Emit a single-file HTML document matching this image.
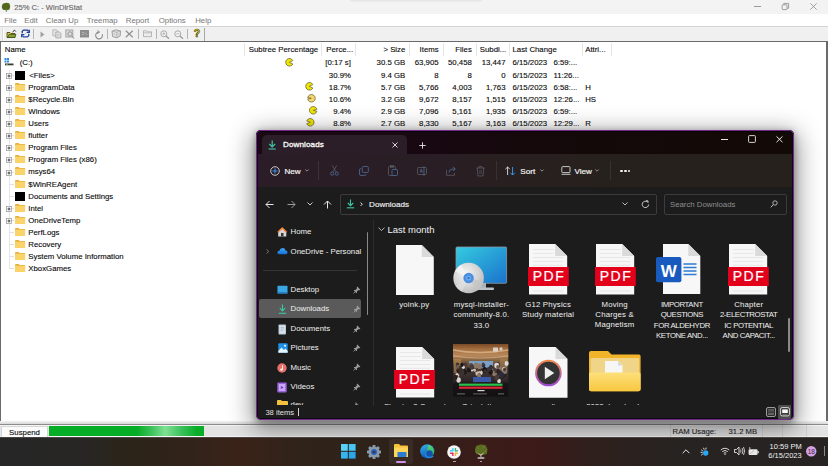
<!DOCTYPE html>
<html><head><meta charset="utf-8"><style>
html,body{margin:0;padding:0;width:828px;height:466px;overflow:hidden;background:#fff;}
body{position:relative;font-family:"Liberation Sans", sans-serif;}
.t{position:absolute;white-space:nowrap;}
.b{position:absolute;}
svg.b{overflow:visible;}
</style></head><body>
<div class="b" style="left:0px;top:0px;width:828px;height:14px;background:#f3f3f3"></div><div class="b" style="left:350px;top:0px;width:132px;height:3.2px;background:linear-gradient(rgba(0,0,0,0.055),rgba(0,0,0,0));border-radius:0 0 30px 30px;filter:blur(0.6px)"></div><svg class="b" style="left:1px;top:2px;" width="10" height="10" viewBox="0 0 10 10"><path d="M1.2 3Q1.5 1 3.5 1.2Q5 0.2 6.8 1Q8.8 0.8 8.8 2.8Q9.6 4.5 8.8 6.2Q9 8 7 8Q5.5 8.6 4 8Q1.8 8.4 1.2 6.5Q0.3 4.8 1.2 3Z" fill="#506a1c"/><circle cx="7.2" cy="5" r="0.9" fill="#7a4a30" opacity="0.7"/><circle cx="2.4" cy="5.2" r="0.7" fill="#7a4a30" opacity="0.6"/><rect x="4.8" y="7.5" width="1" height="2.5" fill="#8a8a7a"/></svg><div class="t" style="left:14.2px;top:1.5999999999999996px;font-size:7.6px;line-height:12px;color:#666;font-weight:normal;-webkit-text-stroke:0.12px #666;">25% C: - WinDirStat</div><div class="b" style="left:754.3px;top:6px;width:6.4px;height:0.8px;background:#9a9a9a"></div><svg class="b" style="left:780.5px;top:2.2px;" width="9" height="9" viewBox="0 0 9 9"><rect x="1.2" y="2.8" width="4.8" height="4.8" rx="0.6" fill="none" stroke="#8a8a8a" stroke-width="0.8"/><path d="M2.8 2.8V1.4H7.6V6.2H6" fill="none" stroke="#8a8a8a" stroke-width="0.8"/></svg><svg class="b" style="left:809.5px;top:3.1px;" width="7" height="7" viewBox="0 0 7 7"><path d="M0.3 0.3L6.7 6.7M6.7 0.3L0.3 6.7" stroke="#8a8a8a" stroke-width="0.8"/></svg><div class="b" style="left:0px;top:14px;width:828px;height:12.5px;background:#fff"></div><div class="t" style="left:4.2px;top:14.8px;font-size:7.8px;line-height:12px;color:#7c7c7c;font-weight:normal;-webkit-text-stroke:0.05px #7c7c7c">File</div><div class="t" style="left:24.2px;top:14.8px;font-size:7.8px;line-height:12px;color:#7c7c7c;font-weight:normal;-webkit-text-stroke:0.05px #7c7c7c">Edit</div><div class="t" style="left:45.8px;top:14.8px;font-size:7.8px;line-height:12px;color:#7c7c7c;font-weight:normal;-webkit-text-stroke:0.05px #7c7c7c">Clean Up</div><div class="t" style="left:86.7px;top:14.8px;font-size:7.8px;line-height:12px;color:#7c7c7c;font-weight:normal;-webkit-text-stroke:0.05px #7c7c7c">Treemap</div><div class="t" style="left:125.8px;top:14.8px;font-size:7.8px;line-height:12px;color:#7c7c7c;font-weight:normal;-webkit-text-stroke:0.05px #7c7c7c">Report</div><div class="t" style="left:158.8px;top:14.8px;font-size:7.8px;line-height:12px;color:#7c7c7c;font-weight:normal;-webkit-text-stroke:0.05px #7c7c7c">Options</div><div class="t" style="left:195.2px;top:14.8px;font-size:7.8px;line-height:12px;color:#7c7c7c;font-weight:normal;-webkit-text-stroke:0.05px #7c7c7c">Help</div><div class="b" style="left:0px;top:26px;width:828px;height:1px;background:#d4d4d4"></div><div class="b" style="left:0px;top:27px;width:828px;height:14px;background:#f0f0f0"></div><div class="b" style="left:1.8px;top:28px;width:1px;height:13px;background:#dadada"></div><div class="b" style="left:2.8px;top:28px;width:0.8px;height:13px;background:#fff"></div><svg class="b" style="left:6px;top:28.5px;" width="11" height="10" viewBox="0 0 11 10"><path d="M1 3.5H4L5 4.5H9V8.5H1Z" fill="#d8c040" stroke="#3a3a10" stroke-width="0.8"/><path d="M1.5 8.5L3 5.5H10L8.8 8.5Z" fill="#8aa030" stroke="#2a3a10" stroke-width="0.6"/><path d="M6.5 3L8.5 1.2L9.8 2.5" fill="none" stroke="#222" stroke-width="1"/></svg><svg class="b" style="left:20.5px;top:29.3px;" width="9" height="9" viewBox="0 0 9 9"><path d="M1.2 4.3V2.2L2.6 1.1H6.6L7.8 2.4" fill="none" stroke="#1a3a90" stroke-width="1.3"/><path d="M8.4 0.8V3.4H5.8" fill="none" stroke="#1a3a90" stroke-width="1.1"/><path d="M7.8 4.7V6.8L6.4 7.9H2.4L1.2 6.6" fill="none" stroke="#2048a8" stroke-width="1.3"/><path d="M0.6 8.2V5.6H3.2" fill="none" stroke="#2048a8" stroke-width="1.1"/><path d="M2.5 6.5L6.5 2.5" stroke="#7a6ac8" stroke-width="0.6" opacity="0.6"/></svg><div class="b" style="left:33.2px;top:29px;width:1px;height:10px;background:#b4b4b4"></div><svg class="b" style="left:40px;top:30.5px;" width="5" height="7" viewBox="0 0 5 7"><path d="M0.5 0.5L4.5 3.5L0.5 6.5Z" fill="#a0a0a0"/></svg><svg class="b" style="left:51.5px;top:29px;" width="10" height="9.5" viewBox="0 0 10 9.5"><path d="M0.8 0.8H4.5L5.8 2.1V6.8H0.8Z" fill="#e6e6e6" stroke="#b4b4b4" stroke-width="0.9"/><path d="M3.8 3H7.6L8.9 4.3V8.9H3.8Z" fill="#e0e0e0" stroke="#a8a8a8" stroke-width="0.9"/><path d="M5 5.5H7.5M5 7H7.5" stroke="#b8b8b8" stroke-width="0.6"/></svg><svg class="b" style="left:65px;top:29px;" width="10" height="10" viewBox="0 0 10 10"><rect x="0.8" y="1" width="7" height="7" fill="#d8d8d8" stroke="#a8a8a8" stroke-width="1"/><circle cx="5" cy="5" r="2.2" fill="none" stroke="#9a9a9a" stroke-width="1"/><path d="M7 7L9 9.5" stroke="#9a9a9a" stroke-width="1.2"/></svg><svg class="b" style="left:80px;top:30px;" width="9" height="7.5" viewBox="0 0 9 7.5"><rect x="0" y="0" width="9" height="7.5" fill="#8c8c8c"/><path d="M2 2.5H4M2 4.5H4M5 2.5L7 5" stroke="#c8c8c8" stroke-width="0.7"/></svg><svg class="b" style="left:93.5px;top:30px;" width="10" height="9" viewBox="0 0 10 9"><path d="M4.6 2.1A3.4 3.4 0 1 0 8.2 4.2" fill="none" stroke="#8a8a8a" stroke-width="1.1"/><path d="M3.4 0.6L5.6 2.1L3.4 3.6" fill="none" stroke="#8a8a8a" stroke-width="1"/></svg><div class="b" style="left:106.6px;top:29px;width:1px;height:10px;background:#b4b4b4"></div><svg class="b" style="left:110.8px;top:29.2px;" width="10.5" height="9.5" viewBox="0 0 10.5 9.5"><path d="M1 2.2L5 0.8L9.6 2L9.2 7L5.8 8.8L1.6 7.6Z" fill="#dedede" stroke="#9a9a9a" stroke-width="0.9"/><path d="M5.8 3.2V8.6M1 2.2L5.8 3.2L9.6 2" fill="none" stroke="#a8a8a8" stroke-width="0.7"/><path d="M2.8 4.5L4.2 5.8M8 4.2L7 6" stroke="#b0b0b0" stroke-width="0.7"/></svg><svg class="b" style="left:125px;top:30.2px;" width="8.5" height="8" viewBox="0 0 8.5 8"><path d="M0.8 0.8L7.7 7.2M7.7 0.8L0.8 7.2" stroke="#8f8f8f" stroke-width="1.2"/></svg><div class="b" style="left:138.3px;top:29px;width:1px;height:10px;background:#b4b4b4"></div><svg class="b" style="left:143px;top:30.3px;" width="9" height="7.2" viewBox="0 0 9 7.2"><path d="M0.5 6.7V0.8H3.5L4.5 1.8H8.5V6.7Z" fill="#ececec" stroke="#b0b0b0" stroke-width="0.9"/><path d="M0.5 2.8H8.5" stroke="#b0b0b0" stroke-width="0.7"/></svg><div class="b" style="left:155.7px;top:29px;width:1px;height:10px;background:#b4b4b4"></div><svg class="b" style="left:160px;top:30px;" width="9.5" height="9" viewBox="0 0 9.5 9"><circle cx="3.8" cy="3.8" r="3" fill="#f4f4f4" stroke="#a8a8a8" stroke-width="1"/><path d="M2.3 3.8H5.3M3.8 2.3V5.3" stroke="#a8a8a8" stroke-width="0.8"/><path d="M6 6L9 8.8" stroke="#9a9a9a" stroke-width="1.3"/></svg><svg class="b" style="left:174px;top:30px;" width="9.5" height="9" viewBox="0 0 9.5 9"><circle cx="3.8" cy="3.8" r="3" fill="#f4f4f4" stroke="#a8a8a8" stroke-width="1"/><path d="M2.3 3.8H5.3" stroke="#a8a8a8" stroke-width="0.8"/><path d="M6 6L9 8.8" stroke="#9a9a9a" stroke-width="1.3"/></svg><div class="b" style="left:187.3px;top:29px;width:1px;height:10px;background:#b4b4b4"></div><svg class="b" style="left:192.5px;top:29px;" width="8" height="9" viewBox="0 0 8 9"><text x="4" y="8.4" text-anchor="middle" font-family="Liberation Sans" font-weight="bold" font-size="10.5" fill="#e4dc00" stroke="#3a3800" stroke-width="0.55">?</text></svg><div class="b" style="left:203.5px;top:27.5px;width:1.2px;height:13.5px;background:#a8a8a8"></div><div class="b" style="left:0px;top:41px;width:828px;height:1px;background:#6a6a6a"></div><div class="b" style="left:0px;top:42px;width:827px;height:381px;background:#fff"></div><div class="b" style="left:0px;top:42px;width:1px;height:381px;background:#6a6a6a"></div><div class="b" style="left:826px;top:42px;width:1.5px;height:381px;background:#6a6a6a"></div><div class="t" style="left:4.8px;top:43.5px;font-size:7.8px;line-height:12px;color:#0a0a0a;font-weight:normal;-webkit-text-stroke:0.12px #0a0a0a;">Name</div><div class="b" style="left:243.5px;top:43px;width:1px;height:13px;background:#e6e6e6"></div><div class="b" style="left:320.7px;top:43px;width:1px;height:13px;background:#e6e6e6"></div><div class="b" style="left:354.6px;top:43px;width:1px;height:13px;background:#e6e6e6"></div><div class="b" style="left:408.9px;top:43px;width:1px;height:13px;background:#e6e6e6"></div><div class="b" style="left:442.6px;top:43px;width:1px;height:13px;background:#e6e6e6"></div><div class="b" style="left:475.8px;top:43px;width:1px;height:13px;background:#e6e6e6"></div><div class="b" style="left:509px;top:43px;width:1px;height:13px;background:#e6e6e6"></div><div class="b" style="left:581.5px;top:43px;width:1px;height:13px;background:#e6e6e6"></div><div class="b" style="left:611.3px;top:43px;width:1px;height:13px;background:#e6e6e6"></div><div class="t" style="left:248.8px;top:43.5px;font-size:7.8px;line-height:12px;color:#0a0a0a;font-weight:normal;-webkit-text-stroke:0.12px #0a0a0a;">Subtree Percentage</div><div class="t" style="left:326.3px;top:43.5px;font-size:7.8px;line-height:12px;color:#0a0a0a;font-weight:normal;-webkit-text-stroke:0.12px #0a0a0a;">Perce...</div><div class="t" style="right:422.7px;top:43.5px;font-size:7.8px;line-height:12px;color:#0a0a0a;font-weight:normal;-webkit-text-stroke:0.12px #0a0a0a;">&gt; Size</div><div class="t" style="right:389.4px;top:43.5px;font-size:7.8px;line-height:12px;color:#0a0a0a;font-weight:normal;-webkit-text-stroke:0.12px #0a0a0a;">Items</div><div class="t" style="right:356.2px;top:43.5px;font-size:7.8px;line-height:12px;color:#0a0a0a;font-weight:normal;-webkit-text-stroke:0.12px #0a0a0a;">Files</div><div class="t" style="left:479.8px;top:43.5px;font-size:7.8px;line-height:12px;color:#0a0a0a;font-weight:normal;-webkit-text-stroke:0.12px #0a0a0a;">Subdi...</div><div class="t" style="left:512.5px;top:43.5px;font-size:7.8px;line-height:12px;color:#0a0a0a;font-weight:normal;-webkit-text-stroke:0.12px #0a0a0a;">Last Change</div><div class="t" style="left:585.2px;top:43.5px;font-size:7.8px;line-height:12px;color:#0a0a0a;font-weight:normal;-webkit-text-stroke:0.12px #0a0a0a;">Attri...</div><div class="b" style="left:8.6px;top:69.50999999999999px;width:0px;height:199.76px;border-left:1px solid #e6e6e6"></div><svg class="b" style="left:3.5px;top:57.9px;" width="10" height="8" viewBox="0 0 10 8"><rect x="0.5" y="0" width="2" height="2" fill="#2a8ae0"/><rect x="3" y="0" width="2" height="2" fill="#2a8ae0"/><rect x="0.5" y="2.5" width="2" height="2" fill="#2a8ae0"/><rect x="3" y="2.5" width="2" height="2" fill="#2a8ae0"/><rect x="1" y="5.5" width="8.5" height="1.8" fill="#3a3a3a"/><rect x="2" y="5.9" width="2" height="1" fill="#6ab040"/></svg><div class="t" style="left:19.7px;top:57.4px;font-size:7.8px;line-height:12px;color:#0a0a0a;font-weight:normal;-webkit-text-stroke:0.12px #0a0a0a;">(C:)</div><div class="b" style="left:9px;top:74.71px;width:5px;height:0px;border-top:1px solid #e0e0e0"></div><svg class="b" style="left:6px;top:72.71px;" width="6" height="6" viewBox="0 0 6 6"><rect x="0.5" y="0.5" width="5" height="5" fill="#fff" stroke="#a0a0a0" stroke-width="0.8"/><path d="M1.5 3H4.5M3 1.5V4.5" stroke="#222" stroke-width="0.8"/></svg><div class="b" style="left:15px;top:70.91px;width:10px;height:9.4px;background:#000"></div><div class="t" style="left:29.2px;top:69.50999999999999px;font-size:7.8px;line-height:12px;color:#0a0a0a;font-weight:normal;-webkit-text-stroke:0.12px #0a0a0a;">&lt;Files&gt;</div><div class="b" style="left:9px;top:86.82000000000001px;width:5px;height:0px;border-top:1px solid #e0e0e0"></div><svg class="b" style="left:6px;top:84.82000000000001px;" width="6" height="6" viewBox="0 0 6 6"><rect x="0.5" y="0.5" width="5" height="5" fill="#fff" stroke="#a0a0a0" stroke-width="0.8"/><path d="M1.5 3H4.5M3 1.5V4.5" stroke="#222" stroke-width="0.8"/></svg><svg class="b" style="left:15px;top:82.72px;" width="10.2" height="8" viewBox="0 0 10.2 8"><path d="M0 1.2Q0 0 1 0H3.6L4.6 1H9.5Q10.2 1 10.2 1.8V2.2H0Z" fill="#e8b23a"/><rect x="0" y="1.8" width="10.2" height="6.2" rx="0.6" fill="#fad46a"/></svg><div class="t" style="left:28.3px;top:81.62px;font-size:7.8px;line-height:12px;color:#0a0a0a;font-weight:normal;-webkit-text-stroke:0.12px #0a0a0a;">ProgramData</div><div class="b" style="left:9px;top:98.92999999999999px;width:5px;height:0px;border-top:1px solid #e0e0e0"></div><svg class="b" style="left:6px;top:96.92999999999999px;" width="6" height="6" viewBox="0 0 6 6"><rect x="0.5" y="0.5" width="5" height="5" fill="#fff" stroke="#a0a0a0" stroke-width="0.8"/><path d="M1.5 3H4.5M3 1.5V4.5" stroke="#222" stroke-width="0.8"/></svg><svg class="b" style="left:15px;top:94.82999999999998px;" width="10.2" height="8" viewBox="0 0 10.2 8"><path d="M0 1.2Q0 0 1 0H3.6L4.6 1H9.5Q10.2 1 10.2 1.8V2.2H0Z" fill="#e8b23a"/><rect x="0" y="1.8" width="10.2" height="6.2" rx="0.6" fill="#fad46a"/></svg><div class="t" style="left:28.3px;top:93.72999999999999px;font-size:7.8px;line-height:12px;color:#0a0a0a;font-weight:normal;-webkit-text-stroke:0.12px #0a0a0a;">$Recycle.Bin</div><div class="b" style="left:9px;top:111.04px;width:5px;height:0px;border-top:1px solid #e0e0e0"></div><svg class="b" style="left:6px;top:109.04px;" width="6" height="6" viewBox="0 0 6 6"><rect x="0.5" y="0.5" width="5" height="5" fill="#fff" stroke="#a0a0a0" stroke-width="0.8"/><path d="M1.5 3H4.5M3 1.5V4.5" stroke="#222" stroke-width="0.8"/></svg><svg class="b" style="left:15px;top:106.94px;" width="10.2" height="8" viewBox="0 0 10.2 8"><path d="M0 1.2Q0 0 1 0H3.6L4.6 1H9.5Q10.2 1 10.2 1.8V2.2H0Z" fill="#e8b23a"/><rect x="0" y="1.8" width="10.2" height="6.2" rx="0.6" fill="#fad46a"/></svg><div class="t" style="left:28.3px;top:105.84px;font-size:7.8px;line-height:12px;color:#0a0a0a;font-weight:normal;-webkit-text-stroke:0.12px #0a0a0a;">Windows</div><div class="b" style="left:9px;top:123.14999999999999px;width:5px;height:0px;border-top:1px solid #e0e0e0"></div><svg class="b" style="left:6px;top:121.14999999999999px;" width="6" height="6" viewBox="0 0 6 6"><rect x="0.5" y="0.5" width="5" height="5" fill="#fff" stroke="#a0a0a0" stroke-width="0.8"/><path d="M1.5 3H4.5M3 1.5V4.5" stroke="#222" stroke-width="0.8"/></svg><svg class="b" style="left:15px;top:119.04999999999998px;" width="10.2" height="8" viewBox="0 0 10.2 8"><path d="M0 1.2Q0 0 1 0H3.6L4.6 1H9.5Q10.2 1 10.2 1.8V2.2H0Z" fill="#e8b23a"/><rect x="0" y="1.8" width="10.2" height="6.2" rx="0.6" fill="#fad46a"/></svg><div class="t" style="left:28.3px;top:117.94999999999999px;font-size:7.8px;line-height:12px;color:#0a0a0a;font-weight:normal;-webkit-text-stroke:0.12px #0a0a0a;">Users</div><div class="b" style="left:9px;top:135.26px;width:5px;height:0px;border-top:1px solid #e0e0e0"></div><svg class="b" style="left:6px;top:133.26px;" width="6" height="6" viewBox="0 0 6 6"><rect x="0.5" y="0.5" width="5" height="5" fill="#fff" stroke="#a0a0a0" stroke-width="0.8"/><path d="M1.5 3H4.5M3 1.5V4.5" stroke="#222" stroke-width="0.8"/></svg><svg class="b" style="left:15px;top:131.16px;" width="10.2" height="8" viewBox="0 0 10.2 8"><path d="M0 1.2Q0 0 1 0H3.6L4.6 1H9.5Q10.2 1 10.2 1.8V2.2H0Z" fill="#e8b23a"/><rect x="0" y="1.8" width="10.2" height="6.2" rx="0.6" fill="#fad46a"/></svg><div class="t" style="left:28.3px;top:130.06px;font-size:7.8px;line-height:12px;color:#0a0a0a;font-weight:normal;-webkit-text-stroke:0.12px #0a0a0a;">flutter</div><div class="b" style="left:9px;top:147.36999999999998px;width:5px;height:0px;border-top:1px solid #e0e0e0"></div><svg class="b" style="left:6px;top:145.36999999999998px;" width="6" height="6" viewBox="0 0 6 6"><rect x="0.5" y="0.5" width="5" height="5" fill="#fff" stroke="#a0a0a0" stroke-width="0.8"/><path d="M1.5 3H4.5M3 1.5V4.5" stroke="#222" stroke-width="0.8"/></svg><svg class="b" style="left:15px;top:143.26999999999998px;" width="10.2" height="8" viewBox="0 0 10.2 8"><path d="M0 1.2Q0 0 1 0H3.6L4.6 1H9.5Q10.2 1 10.2 1.8V2.2H0Z" fill="#e8b23a"/><rect x="0" y="1.8" width="10.2" height="6.2" rx="0.6" fill="#fad46a"/></svg><div class="t" style="left:28.3px;top:142.17px;font-size:7.8px;line-height:12px;color:#0a0a0a;font-weight:normal;-webkit-text-stroke:0.12px #0a0a0a;">Program Files</div><div class="b" style="left:9px;top:159.48px;width:5px;height:0px;border-top:1px solid #e0e0e0"></div><svg class="b" style="left:6px;top:157.48px;" width="6" height="6" viewBox="0 0 6 6"><rect x="0.5" y="0.5" width="5" height="5" fill="#fff" stroke="#a0a0a0" stroke-width="0.8"/><path d="M1.5 3H4.5M3 1.5V4.5" stroke="#222" stroke-width="0.8"/></svg><svg class="b" style="left:15px;top:155.38px;" width="10.2" height="8" viewBox="0 0 10.2 8"><path d="M0 1.2Q0 0 1 0H3.6L4.6 1H9.5Q10.2 1 10.2 1.8V2.2H0Z" fill="#e8b23a"/><rect x="0" y="1.8" width="10.2" height="6.2" rx="0.6" fill="#fad46a"/></svg><div class="t" style="left:28.3px;top:154.28px;font-size:7.8px;line-height:12px;color:#0a0a0a;font-weight:normal;-webkit-text-stroke:0.12px #0a0a0a;">Program Files (x86)</div><div class="b" style="left:9px;top:171.58999999999997px;width:5px;height:0px;border-top:1px solid #e0e0e0"></div><svg class="b" style="left:6px;top:169.58999999999997px;" width="6" height="6" viewBox="0 0 6 6"><rect x="0.5" y="0.5" width="5" height="5" fill="#fff" stroke="#a0a0a0" stroke-width="0.8"/><path d="M1.5 3H4.5M3 1.5V4.5" stroke="#222" stroke-width="0.8"/></svg><svg class="b" style="left:15px;top:167.48999999999998px;" width="10.2" height="8" viewBox="0 0 10.2 8"><path d="M0 1.2Q0 0 1 0H3.6L4.6 1H9.5Q10.2 1 10.2 1.8V2.2H0Z" fill="#e8b23a"/><rect x="0" y="1.8" width="10.2" height="6.2" rx="0.6" fill="#fad46a"/></svg><div class="t" style="left:28.3px;top:166.39px;font-size:7.8px;line-height:12px;color:#0a0a0a;font-weight:normal;-webkit-text-stroke:0.12px #0a0a0a;">msys64</div><div class="b" style="left:9px;top:183.7px;width:5px;height:0px;border-top:1px solid #e0e0e0"></div><svg class="b" style="left:15px;top:179.6px;" width="10.2" height="8" viewBox="0 0 10.2 8"><path d="M0 1.2Q0 0 1 0H3.6L4.6 1H9.5Q10.2 1 10.2 1.8V2.2H0Z" fill="#e8b23a"/><rect x="0" y="1.8" width="10.2" height="6.2" rx="0.6" fill="#fad46a"/></svg><div class="t" style="left:28.3px;top:178.5px;font-size:7.8px;line-height:12px;color:#0a0a0a;font-weight:normal;-webkit-text-stroke:0.12px #0a0a0a;">$WinREAgent</div><div class="b" style="left:9px;top:195.80999999999997px;width:5px;height:0px;border-top:1px solid #e0e0e0"></div><div class="b" style="left:15px;top:192.01px;width:10px;height:9.4px;background:#000"></div><div class="t" style="left:28.3px;top:190.60999999999999px;font-size:7.8px;line-height:12px;color:#0a0a0a;font-weight:normal;-webkit-text-stroke:0.12px #0a0a0a;">Documents and Settings</div><div class="b" style="left:9px;top:207.92px;width:5px;height:0px;border-top:1px solid #e0e0e0"></div><svg class="b" style="left:6px;top:205.92px;" width="6" height="6" viewBox="0 0 6 6"><rect x="0.5" y="0.5" width="5" height="5" fill="#fff" stroke="#a0a0a0" stroke-width="0.8"/><path d="M1.5 3H4.5M3 1.5V4.5" stroke="#222" stroke-width="0.8"/></svg><svg class="b" style="left:15px;top:203.82px;" width="10.2" height="8" viewBox="0 0 10.2 8"><path d="M0 1.2Q0 0 1 0H3.6L4.6 1H9.5Q10.2 1 10.2 1.8V2.2H0Z" fill="#e8b23a"/><rect x="0" y="1.8" width="10.2" height="6.2" rx="0.6" fill="#fad46a"/></svg><div class="t" style="left:28.3px;top:202.72px;font-size:7.8px;line-height:12px;color:#0a0a0a;font-weight:normal;-webkit-text-stroke:0.12px #0a0a0a;">Intel</div><div class="b" style="left:9px;top:220.03px;width:5px;height:0px;border-top:1px solid #e0e0e0"></div><svg class="b" style="left:6px;top:218.03px;" width="6" height="6" viewBox="0 0 6 6"><rect x="0.5" y="0.5" width="5" height="5" fill="#fff" stroke="#a0a0a0" stroke-width="0.8"/><path d="M1.5 3H4.5M3 1.5V4.5" stroke="#222" stroke-width="0.8"/></svg><svg class="b" style="left:15px;top:215.93px;" width="10.2" height="8" viewBox="0 0 10.2 8"><path d="M0 1.2Q0 0 1 0H3.6L4.6 1H9.5Q10.2 1 10.2 1.8V2.2H0Z" fill="#e8b23a"/><rect x="0" y="1.8" width="10.2" height="6.2" rx="0.6" fill="#fad46a"/></svg><div class="t" style="left:28.3px;top:214.83px;font-size:7.8px;line-height:12px;color:#0a0a0a;font-weight:normal;-webkit-text-stroke:0.12px #0a0a0a;">OneDriveTemp</div><div class="b" style="left:9px;top:232.14px;width:5px;height:0px;border-top:1px solid #e0e0e0"></div><svg class="b" style="left:15px;top:228.04px;" width="10.2" height="8" viewBox="0 0 10.2 8"><path d="M0 1.2Q0 0 1 0H3.6L4.6 1H9.5Q10.2 1 10.2 1.8V2.2H0Z" fill="#e8b23a"/><rect x="0" y="1.8" width="10.2" height="6.2" rx="0.6" fill="#fad46a"/></svg><div class="t" style="left:28.3px;top:226.94px;font-size:7.8px;line-height:12px;color:#0a0a0a;font-weight:normal;-webkit-text-stroke:0.12px #0a0a0a;">PerfLogs</div><div class="b" style="left:9px;top:244.24999999999997px;width:5px;height:0px;border-top:1px solid #e0e0e0"></div><svg class="b" style="left:15px;top:240.14999999999998px;" width="10.2" height="8" viewBox="0 0 10.2 8"><path d="M0 1.2Q0 0 1 0H3.6L4.6 1H9.5Q10.2 1 10.2 1.8V2.2H0Z" fill="#e8b23a"/><rect x="0" y="1.8" width="10.2" height="6.2" rx="0.6" fill="#fad46a"/></svg><div class="t" style="left:28.3px;top:239.04999999999998px;font-size:7.8px;line-height:12px;color:#0a0a0a;font-weight:normal;-webkit-text-stroke:0.12px #0a0a0a;">Recovery</div><div class="b" style="left:9px;top:256.35999999999996px;width:5px;height:0px;border-top:1px solid #e0e0e0"></div><svg class="b" style="left:15px;top:252.25999999999996px;" width="10.2" height="8" viewBox="0 0 10.2 8"><path d="M0 1.2Q0 0 1 0H3.6L4.6 1H9.5Q10.2 1 10.2 1.8V2.2H0Z" fill="#e8b23a"/><rect x="0" y="1.8" width="10.2" height="6.2" rx="0.6" fill="#fad46a"/></svg><div class="t" style="left:28.3px;top:251.15999999999997px;font-size:7.8px;line-height:12px;color:#0a0a0a;font-weight:normal;-webkit-text-stroke:0.12px #0a0a0a;">System Volume Information</div><div class="b" style="left:9px;top:268.46999999999997px;width:5px;height:0px;border-top:1px solid #e0e0e0"></div><svg class="b" style="left:15px;top:264.37px;" width="10.2" height="8" viewBox="0 0 10.2 8"><path d="M0 1.2Q0 0 1 0H3.6L4.6 1H9.5Q10.2 1 10.2 1.8V2.2H0Z" fill="#e8b23a"/><rect x="0" y="1.8" width="10.2" height="6.2" rx="0.6" fill="#fad46a"/></svg><div class="t" style="left:28.3px;top:263.27px;font-size:7.8px;line-height:12px;color:#0a0a0a;font-weight:normal;-webkit-text-stroke:0.12px #0a0a0a;">XboxGames</div><svg class="b" style="left:284.9px;top:58.300000000000004px;" width="8.6" height="8.6" viewBox="0 0 8.6 8.6"><path d="M4.3 4.3L7.9 2.5999999999999996A3.8 3.8 0 1 0 7.9 6.0Z" fill="#f0e400" stroke="#5c5a30" stroke-width="0.7"/></svg><svg class="b" style="left:304.9px;top:82.3px;" width="8.6" height="8.6" viewBox="0 0 8.6 8.6"><path d="M4.3 4.3L7.9 2.5999999999999996A3.8 3.8 0 1 0 7.9 6.0Z" fill="#f0e400" stroke="#5c5a30" stroke-width="0.7"/></svg><svg class="b" style="left:307.0px;top:94.3px;" width="8.6" height="8.6" viewBox="0 0 8.6 8.6"><path d="M4.3 4.3L0.7 3.705A3.8 3.8 0 1 1 0.7 4.895Z" fill="#f6d668" stroke="#5c5a30" stroke-width="0.7"/></svg><svg class="b" style="left:308.8px;top:106.3px;" width="8.6" height="8.6" viewBox="0 0 8.6 8.6"><path d="M4.3 4.3L7.9 3.28A3.8 3.8 0 1 0 7.9 5.32Z" fill="#f0e400" stroke="#5c5a30" stroke-width="0.7"/></svg><svg class="b" style="left:305.7px;top:118.4px;" width="8.6" height="8.6" viewBox="0 0 8.6 8.6"><path d="M4.3 4.3L0.7 2.9399999999999995A3.8 3.8 0 1 1 0.7 5.66Z" fill="#f0e400" stroke="#5c5a30" stroke-width="0.7"/></svg><div class="t" style="right:477.1px;top:57.4px;font-size:7.8px;line-height:12px;color:#0a0a0a;font-weight:normal;-webkit-text-stroke:0.12px #0a0a0a;">[0:17 s]</div><div class="t" style="right:422.8px;top:57.4px;font-size:7.8px;line-height:12px;color:#0a0a0a;font-weight:normal;-webkit-text-stroke:0.12px #0a0a0a;">30.5 GB</div><div class="t" style="right:389.4px;top:57.4px;font-size:7.8px;line-height:12px;color:#0a0a0a;font-weight:normal;-webkit-text-stroke:0.12px #0a0a0a;">63,905</div><div class="t" style="right:356.2px;top:57.4px;font-size:7.8px;line-height:12px;color:#0a0a0a;font-weight:normal;-webkit-text-stroke:0.12px #0a0a0a;">50,458</div><div class="t" style="right:322.5px;top:57.4px;font-size:7.8px;line-height:12px;color:#0a0a0a;font-weight:normal;-webkit-text-stroke:0.12px #0a0a0a;">13,447</div><div class="t" style="left:512.5px;top:57.4px;font-size:7.8px;line-height:12px;color:#0a0a0a;font-weight:normal;-webkit-text-stroke:0.12px #0a0a0a;">6/15/2023</div><div class="t" style="left:553.4px;top:57.4px;font-size:7.8px;line-height:12px;color:#0a0a0a;font-weight:normal;-webkit-text-stroke:0.12px #0a0a0a;">6:59:...</div><div class="t" style="right:477.1px;top:69.50999999999999px;font-size:7.8px;line-height:12px;color:#0a0a0a;font-weight:normal;-webkit-text-stroke:0.12px #0a0a0a;">30.9%</div><div class="t" style="right:422.8px;top:69.50999999999999px;font-size:7.8px;line-height:12px;color:#0a0a0a;font-weight:normal;-webkit-text-stroke:0.12px #0a0a0a;">9.4 GB</div><div class="t" style="right:389.4px;top:69.50999999999999px;font-size:7.8px;line-height:12px;color:#0a0a0a;font-weight:normal;-webkit-text-stroke:0.12px #0a0a0a;">8</div><div class="t" style="right:356.2px;top:69.50999999999999px;font-size:7.8px;line-height:12px;color:#0a0a0a;font-weight:normal;-webkit-text-stroke:0.12px #0a0a0a;">8</div><div class="t" style="right:322.5px;top:69.50999999999999px;font-size:7.8px;line-height:12px;color:#0a0a0a;font-weight:normal;-webkit-text-stroke:0.12px #0a0a0a;">0</div><div class="t" style="left:512.5px;top:69.50999999999999px;font-size:7.8px;line-height:12px;color:#0a0a0a;font-weight:normal;-webkit-text-stroke:0.12px #0a0a0a;">6/15/2023</div><div class="t" style="left:553.4px;top:69.50999999999999px;font-size:7.8px;line-height:12px;color:#0a0a0a;font-weight:normal;-webkit-text-stroke:0.12px #0a0a0a;">11:26...</div><div class="t" style="right:477.1px;top:81.62px;font-size:7.8px;line-height:12px;color:#0a0a0a;font-weight:normal;-webkit-text-stroke:0.12px #0a0a0a;">18.7%</div><div class="t" style="right:422.8px;top:81.62px;font-size:7.8px;line-height:12px;color:#0a0a0a;font-weight:normal;-webkit-text-stroke:0.12px #0a0a0a;">5.7 GB</div><div class="t" style="right:389.4px;top:81.62px;font-size:7.8px;line-height:12px;color:#0a0a0a;font-weight:normal;-webkit-text-stroke:0.12px #0a0a0a;">5,766</div><div class="t" style="right:356.2px;top:81.62px;font-size:7.8px;line-height:12px;color:#0a0a0a;font-weight:normal;-webkit-text-stroke:0.12px #0a0a0a;">4,003</div><div class="t" style="right:322.5px;top:81.62px;font-size:7.8px;line-height:12px;color:#0a0a0a;font-weight:normal;-webkit-text-stroke:0.12px #0a0a0a;">1,763</div><div class="t" style="left:512.5px;top:81.62px;font-size:7.8px;line-height:12px;color:#0a0a0a;font-weight:normal;-webkit-text-stroke:0.12px #0a0a0a;">6/15/2023</div><div class="t" style="left:553.4px;top:81.62px;font-size:7.8px;line-height:12px;color:#0a0a0a;font-weight:normal;-webkit-text-stroke:0.12px #0a0a0a;">6:58:...</div><div class="t" style="left:585.2px;top:81.62px;font-size:7.8px;line-height:12px;color:#0a0a0a;font-weight:normal;-webkit-text-stroke:0.12px #0a0a0a;">H</div><div class="t" style="right:477.1px;top:93.72999999999999px;font-size:7.8px;line-height:12px;color:#0a0a0a;font-weight:normal;-webkit-text-stroke:0.12px #0a0a0a;">10.6%</div><div class="t" style="right:422.8px;top:93.72999999999999px;font-size:7.8px;line-height:12px;color:#0a0a0a;font-weight:normal;-webkit-text-stroke:0.12px #0a0a0a;">3.2 GB</div><div class="t" style="right:389.4px;top:93.72999999999999px;font-size:7.8px;line-height:12px;color:#0a0a0a;font-weight:normal;-webkit-text-stroke:0.12px #0a0a0a;">9,672</div><div class="t" style="right:356.2px;top:93.72999999999999px;font-size:7.8px;line-height:12px;color:#0a0a0a;font-weight:normal;-webkit-text-stroke:0.12px #0a0a0a;">8,157</div><div class="t" style="right:322.5px;top:93.72999999999999px;font-size:7.8px;line-height:12px;color:#0a0a0a;font-weight:normal;-webkit-text-stroke:0.12px #0a0a0a;">1,515</div><div class="t" style="left:512.5px;top:93.72999999999999px;font-size:7.8px;line-height:12px;color:#0a0a0a;font-weight:normal;-webkit-text-stroke:0.12px #0a0a0a;">6/15/2023</div><div class="t" style="left:553.4px;top:93.72999999999999px;font-size:7.8px;line-height:12px;color:#0a0a0a;font-weight:normal;-webkit-text-stroke:0.12px #0a0a0a;">12:26...</div><div class="t" style="left:585.2px;top:93.72999999999999px;font-size:7.8px;line-height:12px;color:#0a0a0a;font-weight:normal;-webkit-text-stroke:0.12px #0a0a0a;">HS</div><div class="t" style="right:477.1px;top:105.84px;font-size:7.8px;line-height:12px;color:#0a0a0a;font-weight:normal;-webkit-text-stroke:0.12px #0a0a0a;">9.4%</div><div class="t" style="right:422.8px;top:105.84px;font-size:7.8px;line-height:12px;color:#0a0a0a;font-weight:normal;-webkit-text-stroke:0.12px #0a0a0a;">2.9 GB</div><div class="t" style="right:389.4px;top:105.84px;font-size:7.8px;line-height:12px;color:#0a0a0a;font-weight:normal;-webkit-text-stroke:0.12px #0a0a0a;">7,096</div><div class="t" style="right:356.2px;top:105.84px;font-size:7.8px;line-height:12px;color:#0a0a0a;font-weight:normal;-webkit-text-stroke:0.12px #0a0a0a;">5,161</div><div class="t" style="right:322.5px;top:105.84px;font-size:7.8px;line-height:12px;color:#0a0a0a;font-weight:normal;-webkit-text-stroke:0.12px #0a0a0a;">1,935</div><div class="t" style="left:512.5px;top:105.84px;font-size:7.8px;line-height:12px;color:#0a0a0a;font-weight:normal;-webkit-text-stroke:0.12px #0a0a0a;">6/15/2023</div><div class="t" style="left:553.4px;top:105.84px;font-size:7.8px;line-height:12px;color:#0a0a0a;font-weight:normal;-webkit-text-stroke:0.12px #0a0a0a;">6:59:...</div><div class="t" style="right:477.1px;top:117.94999999999999px;font-size:7.8px;line-height:12px;color:#0a0a0a;font-weight:normal;-webkit-text-stroke:0.12px #0a0a0a;">8.8%</div><div class="t" style="right:422.8px;top:117.94999999999999px;font-size:7.8px;line-height:12px;color:#0a0a0a;font-weight:normal;-webkit-text-stroke:0.12px #0a0a0a;">2.7 GB</div><div class="t" style="right:389.4px;top:117.94999999999999px;font-size:7.8px;line-height:12px;color:#0a0a0a;font-weight:normal;-webkit-text-stroke:0.12px #0a0a0a;">8,330</div><div class="t" style="right:356.2px;top:117.94999999999999px;font-size:7.8px;line-height:12px;color:#0a0a0a;font-weight:normal;-webkit-text-stroke:0.12px #0a0a0a;">5,167</div><div class="t" style="right:322.5px;top:117.94999999999999px;font-size:7.8px;line-height:12px;color:#0a0a0a;font-weight:normal;-webkit-text-stroke:0.12px #0a0a0a;">3,163</div><div class="t" style="left:512.5px;top:117.94999999999999px;font-size:7.8px;line-height:12px;color:#0a0a0a;font-weight:normal;-webkit-text-stroke:0.12px #0a0a0a;">6/15/2023</div><div class="t" style="left:553.4px;top:117.94999999999999px;font-size:7.8px;line-height:12px;color:#0a0a0a;font-weight:normal;-webkit-text-stroke:0.12px #0a0a0a;">12:29...</div><div class="t" style="left:585.2px;top:117.94999999999999px;font-size:7.8px;line-height:12px;color:#0a0a0a;font-weight:normal;-webkit-text-stroke:0.12px #0a0a0a;">R</div><div class="b" style="left:0px;top:421.3px;width:828px;height:2.3px;background:linear-gradient(#f2f2f2,#d8d8d8)"></div><div class="b" style="left:0px;top:423.6px;width:828px;height:1px;background:#8c8c8c"></div><div class="b" style="left:0px;top:424.6px;width:828px;height:1.2px;background:#f4f4f4"></div><div class="b" style="left:0px;top:425.8px;width:828px;height:10.4px;background:#e4e4e4"></div><div class="b" style="left:0px;top:436.2px;width:828px;height:0.8px;background:#f6f6f6"></div><div class="b" style="left:1px;top:426px;width:47px;height:11px;background:#fbfbfb;border:1px solid #d6d6d6;box-sizing:border-box;border-bottom:none"></div><div class="t" style="left:-75.5px;width:200px;text-align:center;top:426.6px;font-size:7.8px;line-height:12px;color:#0a0a0a;font-weight:normal;-webkit-text-stroke:0.12px #0a0a0a;">Suspend</div><div class="b" style="left:49.3px;top:425.8px;width:154.5px;height:10.2px;background:linear-gradient(90deg,#06ad26 0%,#06ad26 57%,#3cc25a 66%,#7ee094 75%,#38c058 86%,#0aae2a 95%,#06ad26 100%)"></div><div class="b" style="left:670.4px;top:425px;width:1px;height:12px;background:#d4d4d4"></div><div class="b" style="left:761.8px;top:425px;width:1px;height:12px;background:#d4d4d4"></div><div class="b" style="left:781.6px;top:425px;width:1px;height:12px;background:#d4d4d4"></div><div class="b" style="left:805.9px;top:425px;width:1px;height:12px;background:#d4d4d4"></div><div class="t" style="left:672.6px;top:426.0px;font-size:7.7px;line-height:12px;color:#2a2a2a;font-weight:normal;-webkit-text-stroke:0.12px #2a2a2a;">RAM Usage:</div><div class="t" style="right:70.89999999999998px;top:426.0px;font-size:7.7px;line-height:12px;color:#2a2a2a;font-weight:normal;-webkit-text-stroke:0.12px #2a2a2a;">31.2 MB</div><div class="b" style="left:256px;top:130px;width:537.5px;height:289.8px;border-radius:5px;box-shadow:0 6px 24px 4px rgba(0,0,0,0.42),0 2px 6px 1px rgba(0,0,0,0.28);background:#1c1c1c;overflow:hidden;"><div class="b" style="left:0;top:0;width:100%;height:24px;background:linear-gradient(90deg,#1a0914 0%,#180812 30%,#140909 60%,#120a07 100%)"></div><div class="b" style="left:0;top:24px;width:100%;height:32.8px;background:linear-gradient(90deg,#2b1d27 0%,#2a1e25 30%,#28201f 52%,#26211c 70%,#26211d 100%)"></div></div><div class="b" style="left:256px;top:130px;width:537.5px;height:289.8px;border-radius:5px;border:1px solid #74288c;box-sizing:border-box;box-shadow:inset 0 0 0 0.8px rgba(5,0,8,0.85);"></div><div class="b" style="left:262px;top:135.3px;width:145px;height:19px;background:#2b1e28;border-radius:5px 5px 0 0"></div><svg class="b" style="left:268px;top:140px;" width="8.5" height="10" viewBox="0 0 8.5 10"><path d="M4.2 0.5V6.8M1.3 4L4.2 6.9L7.1 4" fill="none" stroke="#3ec6a4" stroke-width="1.2"/><path d="M0.6 9H7.8" stroke="#3ec6a4" stroke-width="1.1"/></svg><div class="t" style="left:283px;top:139.0px;font-size:8.1px;line-height:12px;color:#f2f2f2;font-weight:normal;-webkit-text-stroke:0.35px #f2f2f2;letter-spacing:0.1px">Downloads</div><svg class="b" style="left:391.5px;top:142px;" width="6" height="6" viewBox="0 0 6 6"><path d="M0.5 0.5L5.5 5.5M5.5 0.5L0.5 5.5" stroke="#e8e8e8" stroke-width="0.9"/></svg><svg class="b" style="left:419px;top:142px;" width="7" height="7" viewBox="0 0 7 7"><path d="M3.5 0.3V6.7M0.3 3.5H6.7" stroke="#e8e8e8" stroke-width="0.9"/></svg><div class="b" style="left:720.8px;top:138.6px;width:7.2px;height:0.9px;background:#e8e8e8"></div><svg class="b" style="left:747.8px;top:135.4px;" width="8" height="8" viewBox="0 0 8 8"><rect x="0.6" y="0.6" width="6.8" height="6.8" rx="0.8" fill="none" stroke="#e8e8e8" stroke-width="0.9"/></svg><svg class="b" style="left:776px;top:135.6px;" width="7" height="6.6" viewBox="0 0 7 6.6"><path d="M0.5 0.4L6.5 6.2M6.5 0.4L0.5 6.2" stroke="#ececec" stroke-width="1"/></svg><svg class="b" style="left:269.5px;top:166.3px;" width="10" height="10" viewBox="0 0 10 10"><circle cx="5" cy="5" r="4.3" fill="none" stroke="#d8d8d8" stroke-width="0.9"/><path d="M5 2.4V7.6M2.4 5H7.6" stroke="#3ba0ff" stroke-width="0.9"/></svg><div class="t" style="left:284.5px;top:166.0px;font-size:8.1px;line-height:12px;color:#f4f4f4;font-weight:normal;-webkit-text-stroke:0.2px #f4f4f4">New</div><svg class="b" style="left:304.5px;top:168.5px;" width="4" height="3" viewBox="0 0 4 3"><path d="M0.3 0.5L2 2.2L3.7 0.5" fill="none" stroke="#bbb" stroke-width="0.7"/></svg><div class="b" style="left:318.3px;top:161.3px;width:0.8px;height:18.5px;background:#3e3238"></div><svg class="b" style="left:330px;top:165px;" width="9" height="11" viewBox="0 0 9 11"><path d="M2.2 0.5L6.2 7M6.8 0.5L2.8 7" stroke="#5c5a66" stroke-width="0.8"/><circle cx="2.2" cy="8.6" r="1.6" fill="none" stroke="#4d6d9c" stroke-width="0.8"/><circle cx="6.8" cy="8.6" r="1.6" fill="none" stroke="#4d6d9c" stroke-width="0.8"/></svg><svg class="b" style="left:359px;top:166px;" width="10" height="10" viewBox="0 0 10 10"><rect x="3.3" y="0.5" width="6" height="6" rx="1" fill="none" stroke="#4d6d9c" stroke-width="0.8"/><path d="M2 2.5Q0.5 2.5 0.5 4V8Q0.5 9.5 2 9.5H5.5Q7 9.5 7 8" fill="none" stroke="#4d6d9c" stroke-width="0.8"/></svg><svg class="b" style="left:388px;top:165px;" width="10" height="11" viewBox="0 0 10 11"><rect x="0.5" y="1.5" width="7" height="9" rx="1" fill="none" stroke="#5c5a66" stroke-width="0.8"/><rect x="2.5" y="0.5" width="3" height="2" fill="none" stroke="#5c5a66" stroke-width="0.7"/><rect x="4" y="4.5" width="5.5" height="6" rx="0.8" fill="#2a1e26" stroke="#4d6d9c" stroke-width="0.8"/></svg><svg class="b" style="left:417px;top:165.5px;" width="10" height="10" viewBox="0 0 10 10"><rect x="0.5" y="1.5" width="9" height="7" rx="1" fill="none" stroke="#5c5a66" stroke-width="0.8"/><path d="M3 6.5L4.3 3L5.6 6.5M3.5 5.3H5.1" fill="none" stroke="#4d6d9c" stroke-width="0.7"/><path d="M7 0.3V9.7" stroke="#4d6d9c" stroke-width="0.8"/></svg><svg class="b" style="left:446.3px;top:165.5px;" width="10" height="10" viewBox="0 0 10 10"><path d="M0.5 4V9.3H8.5V7" fill="none" stroke="#5c5a66" stroke-width="0.8"/><path d="M3 6.5Q3 3 7 3H9M7 1L9.3 3L7 5" fill="none" stroke="#4d6d9c" stroke-width="0.8"/></svg><svg class="b" style="left:475.5px;top:165.5px;" width="9" height="11" viewBox="0 0 9 11"><path d="M0.3 2H8.7M3 2V0.6H6V2M1.3 2L2 10H7L7.7 2" fill="none" stroke="#5c5a66" stroke-width="0.8"/><path d="M3.8 4V8M5.2 4V8" stroke="#5c5a66" stroke-width="0.6"/></svg><div class="b" style="left:496.3px;top:161.3px;width:0.8px;height:18.5px;background:#3a3030"></div><svg class="b" style="left:505px;top:166px;" width="11" height="10" viewBox="0 0 11 10"><path d="M2.6 9V1M0.4 3.2L2.6 1L4.8 3.2" fill="none" stroke="#e0e0e0" stroke-width="0.9"/><path d="M7.6 1V9M5.4 6.8L7.6 9L9.8 6.8" fill="none" stroke="#3ba0ff" stroke-width="0.9"/></svg><div class="t" style="left:520.3px;top:166.0px;font-size:8.1px;line-height:12px;color:#f4f4f4;font-weight:normal;-webkit-text-stroke:0.2px #f4f4f4">Sort</div><svg class="b" style="left:539.5px;top:168.5px;" width="4" height="3" viewBox="0 0 4 3"><path d="M0.3 0.5L2 2.2L3.7 0.5" fill="none" stroke="#bbb" stroke-width="0.7"/></svg><svg class="b" style="left:561px;top:166px;" width="10" height="9" viewBox="0 0 10 9"><rect x="0.8" y="0.6" width="8.2" height="6" rx="0.8" fill="none" stroke="#d8d8d8" stroke-width="0.9"/><path d="M0.5 8.3H9.5" stroke="#d8d8d8" stroke-width="0.9"/></svg><div class="t" style="left:574.4px;top:166.0px;font-size:8.1px;line-height:12px;color:#f4f4f4;font-weight:normal;-webkit-text-stroke:0.2px #f4f4f4">View</div><svg class="b" style="left:595px;top:168.5px;" width="4" height="3" viewBox="0 0 4 3"><path d="M0.3 0.5L2 2.2L3.7 0.5" fill="none" stroke="#bbb" stroke-width="0.7"/></svg><div class="b" style="left:610.2px;top:161.3px;width:0.8px;height:18.5px;background:#3a322d"></div><div class="b" style="left:620.45px;top:169.9px;width:2.3px;height:2.3px;background:#f4f4f4;border-radius:1.2px"></div><div class="b" style="left:624.25px;top:169.9px;width:2.3px;height:2.3px;background:#f4f4f4;border-radius:1.2px"></div><div class="b" style="left:628.0500000000001px;top:169.9px;width:2.3px;height:2.3px;background:#f4f4f4;border-radius:1.2px"></div><svg class="b" style="left:265px;top:199.5px;" width="9" height="9" viewBox="0 0 9 9"><path d="M8.5 4.5H1M4.5 1L1 4.5L4.5 8" fill="none" stroke="#e8e8e8" stroke-width="1"/></svg><svg class="b" style="left:286.5px;top:199.5px;" width="9" height="9" viewBox="0 0 9 9"><path d="M0.5 4.5H8M4.5 1L8 4.5L4.5 8" fill="none" stroke="#9a9a9a" stroke-width="1"/></svg><svg class="b" style="left:306.5px;top:202px;" width="6" height="4" viewBox="0 0 6 4"><path d="M0.5 0.5L3 3L5.5 0.5" fill="none" stroke="#e0e0e0" stroke-width="0.9"/></svg><svg class="b" style="left:322.5px;top:199.5px;" width="9" height="9" viewBox="0 0 9 9"><path d="M4.5 8.5V1M1 4.5L4.5 1L8 4.5" fill="none" stroke="#e8e8e8" stroke-width="1"/></svg><div class="b" style="left:340.1px;top:193.5px;width:316.7px;height:21.2px;border:1px solid #3c3c3c;box-sizing:border-box;border-radius:2px;background:#1c1c1c"></div><svg class="b" style="left:345.5px;top:199px;" width="9" height="10" viewBox="0 0 9 10"><path d="M4.5 0.5V6.6M1.8 4L4.5 6.7L7.2 4" fill="none" stroke="#3ec6a4" stroke-width="1.1"/><path d="M0.8 8.8H8.2" stroke="#3ec6a4" stroke-width="1.1"/></svg><svg class="b" style="left:359.8px;top:202.3px;" width="3" height="4.4" viewBox="0 0 3 4.4"><path d="M0.6 0.5L2.3 2.2L0.6 3.9" fill="none" stroke="#e8e8e8" stroke-width="1"/></svg><div class="t" style="left:369.1px;top:198.5px;font-size:8.1px;line-height:12px;color:#f0f0f0;font-weight:normal;-webkit-text-stroke:0.15px #f0f0f0">Downloads</div><svg class="b" style="left:622px;top:202px;" width="6" height="4" viewBox="0 0 6 4"><path d="M0.5 0.5L3 3L5.5 0.5" fill="none" stroke="#ccc" stroke-width="0.9"/></svg><svg class="b" style="left:641px;top:200px;" width="9" height="9" viewBox="0 0 9 9"><path d="M7.6 4.5A3.2 3.2 0 1 1 6.5 2" fill="none" stroke="#d8d8d8" stroke-width="0.9"/><path d="M5 0.8H7V2.8" fill="none" stroke="#d8d8d8" stroke-width="0.9"/></svg><div class="b" style="left:663.5px;top:193.5px;width:123px;height:21px;border:1px solid #3c3c3c;box-sizing:border-box;border-radius:2px;background:#1c1c1c"></div><div class="t" style="left:670px;top:198.5px;font-size:7.8px;line-height:12px;color:#8e8e8e;font-weight:normal;">Search Downloads</div><svg class="b" style="left:769.5px;top:200px;" width="8" height="8" viewBox="0 0 8 8"><circle cx="5" cy="3" r="2.2" fill="none" stroke="#bbb" stroke-width="0.9"/><path d="M3.4 4.6L0.7 7.3" stroke="#bbb" stroke-width="1"/></svg><div class="t" style="left:290.6px;top:226.2px;font-size:7.8px;line-height:12px;color:#f0f0f0;font-weight:normal;">Home</div><svg class="b" style="left:277.3px;top:226.6px" width="10.5" height="10"><path d="M1.2 4.6V9.4H9.3V4.6L5.25 1.2Z" fill="#d6d6d6"/><path d="M0.7 5.2L5.25 1L9.8 5.2" fill="none" stroke="#f06a30" stroke-width="1.4" stroke-linejoin="round"/><path d="M2.2 3.6L5.25 1L8.3 3.6" fill="none" stroke="#f8a030" stroke-width="0.8"/><rect x="4" y="6" width="2.5" height="3.4" fill="#3a3a3a"/></svg><svg class="b" style="left:265.5px;top:248.6px;" width="4" height="5" viewBox="0 0 4 5"><path d="M0.5 0.5L2.8 2.5L0.5 4.5" fill="none" stroke="#8a8a8a" stroke-width="0.8"/></svg><div class="t" style="left:290.6px;top:245.8px;font-size:7.8px;line-height:12px;color:#f0f0f0;font-weight:normal;">OneDrive - Personal</div><svg class="b" style="left:277px;top:246.60000000000002px" width="11" height="8"><defs><linearGradient id="cg" x1="0" y1="0" x2="0" y2="1"><stop offset="0" stop-color="#40a8f4"/><stop offset="1" stop-color="#1470d8"/></linearGradient></defs><path d="M2.3 7.2Q0.2 7.2 0.4 5.2Q0.7 3.6 2.4 3.7Q3 1.2 5.6 1Q8 1 8.6 3.4Q10.6 3.5 10.6 5.4Q10.5 7.2 8.6 7.2Z" fill="url(#cg)"/></svg><div class="b" style="left:262.9px;top:270px;width:94.6px;height:0.8px;background:#353535"></div><div class="t" style="left:290.6px;top:284.0px;font-size:7.8px;line-height:12px;color:#f0f0f0;font-weight:normal;">Desktop</div><svg class="b" style="left:277px;top:285px" width="11" height="10"><rect x="0.5" y="0.8" width="10" height="7.8" rx="0.8" fill="#39a8e6"/><rect x="0.5" y="7" width="10" height="1.6" fill="#2a78c0"/></svg><svg class="b" style="left:352.5px;top:285.5px;" width="8" height="8" viewBox="0 0 8 8"><path d="M4.2 0.6L7.4 3.8L6.6 4.3L5.3 4.2L3.9 5.6L4 6.8L3.4 7.2L0.8 4.6L1.2 4L2.4 4.1L3.8 2.7L3.7 1.4Z" fill="#9a9a9a"/><path d="M2 6L0.5 7.5" stroke="#9a9a9a" stroke-width="0.8"/></svg><div class="b" style="left:258.6px;top:299.1px;width:102.7px;height:19.1px;background:#5a5a5a;border-radius:2px"></div><div class="t" style="left:290.6px;top:303.1px;font-size:7.8px;line-height:12px;color:#f0f0f0;font-weight:normal;">Downloads</div><svg class="b" style="left:277.5px;top:303.6px" width="9" height="11"><path d="M4.5 0.5V7M1.8 4.2L4.5 6.9L7.2 4.2" fill="none" stroke="#3ec6a4" stroke-width="1.1"/><path d="M0.8 9.3H8.2" stroke="#3ec6a4" stroke-width="1.1"/></svg><svg class="b" style="left:352.5px;top:304.6px;" width="8" height="8" viewBox="0 0 8 8"><path d="M4.2 0.6L7.4 3.8L6.6 4.3L5.3 4.2L3.9 5.6L4 6.8L3.4 7.2L0.8 4.6L1.2 4L2.4 4.1L3.8 2.7L3.7 1.4Z" fill="#9a9a9a"/><path d="M2 6L0.5 7.5" stroke="#9a9a9a" stroke-width="0.8"/></svg><div class="t" style="left:290.6px;top:323.0px;font-size:7.8px;line-height:12px;color:#f0f0f0;font-weight:normal;">Documents</div><svg class="b" style="left:278px;top:323.5px" width="9" height="11"><rect x="0.5" y="0.5" width="7.5" height="10" rx="0.8" fill="#b8c8d8"/><rect x="1.5" y="1.5" width="5.5" height="8" fill="#d8e0ea"/><path d="M2.5 3.5H6M2.5 5H6M2.5 6.5H5" stroke="#8aa0b8" stroke-width="0.5"/></svg><svg class="b" style="left:352.5px;top:324.5px;" width="8" height="8" viewBox="0 0 8 8"><path d="M4.2 0.6L7.4 3.8L6.6 4.3L5.3 4.2L3.9 5.6L4 6.8L3.4 7.2L0.8 4.6L1.2 4L2.4 4.1L3.8 2.7L3.7 1.4Z" fill="#9a9a9a"/><path d="M2 6L0.5 7.5" stroke="#9a9a9a" stroke-width="0.8"/></svg><div class="t" style="left:290.6px;top:342.2px;font-size:7.8px;line-height:12px;color:#f0f0f0;font-weight:normal;">Pictures</div><svg class="b" style="left:277.5px;top:343.2px" width="10" height="10"><rect x="0.3" y="0.3" width="9.4" height="9.4" rx="1" fill="#1e90e8"/><path d="M0.3 8L3.5 4.5L6 7L7.5 5.5L9.7 8V9.7H0.3Z" fill="#e6f4ff"/><circle cx="7" cy="2.8" r="1" fill="#fff"/></svg><svg class="b" style="left:352.5px;top:343.7px;" width="8" height="8" viewBox="0 0 8 8"><path d="M4.2 0.6L7.4 3.8L6.6 4.3L5.3 4.2L3.9 5.6L4 6.8L3.4 7.2L0.8 4.6L1.2 4L2.4 4.1L3.8 2.7L3.7 1.4Z" fill="#9a9a9a"/><path d="M2 6L0.5 7.5" stroke="#9a9a9a" stroke-width="0.8"/></svg><div class="t" style="left:290.6px;top:361.7px;font-size:7.8px;line-height:12px;color:#f0f0f0;font-weight:normal;">Music</div><svg class="b" style="left:277px;top:362.7px" width="10" height="10"><circle cx="5" cy="5" r="4.7" fill="#e8706a"/><path d="M5.5 2V6.5" stroke="#fff" stroke-width="0.8"/><circle cx="4.5" cy="6.6" r="1.2" fill="#fff"/></svg><svg class="b" style="left:352.5px;top:363.2px;" width="8" height="8" viewBox="0 0 8 8"><path d="M4.2 0.6L7.4 3.8L6.6 4.3L5.3 4.2L3.9 5.6L4 6.8L3.4 7.2L0.8 4.6L1.2 4L2.4 4.1L3.8 2.7L3.7 1.4Z" fill="#9a9a9a"/><path d="M2 6L0.5 7.5" stroke="#9a9a9a" stroke-width="0.8"/></svg><div class="t" style="left:290.6px;top:381.1px;font-size:7.8px;line-height:12px;color:#f0f0f0;font-weight:normal;">Videos</div><svg class="b" style="left:277px;top:381.6px" width="10" height="11"><rect x="0.3" y="0.5" width="9.4" height="10" rx="1" fill="#9b5fe0"/><rect x="1.8" y="2" width="6.4" height="7" fill="#c8a8f0"/><path d="M3.8 3.8L6.5 5.5L3.8 7.2Z" fill="#7a3ac8"/></svg><svg class="b" style="left:352.5px;top:382.6px;" width="8" height="8" viewBox="0 0 8 8"><path d="M4.2 0.6L7.4 3.8L6.6 4.3L5.3 4.2L3.9 5.6L4 6.8L3.4 7.2L0.8 4.6L1.2 4L2.4 4.1L3.8 2.7L3.7 1.4Z" fill="#9a9a9a"/><path d="M2 6L0.5 7.5" stroke="#9a9a9a" stroke-width="0.8"/></svg><div class="b" style="left:257px;top:398px;width:116px;height:7px;overflow:hidden"><svg class="b" style="left:20px;top:2px" width="11" height="9"><path d="M0 1Q0 0 1 0H4L5 1H10Q11 1 11 2V9H0Z" fill="#f5c040"/></svg><div class="t" style="left:33.6px;top:0.5px;font-size:7.8px;line-height:12px;color:#f0f0f0">dev</div><svg class="b" style="left:95.5px;top:3px" width="7" height="8"><path d="M2.5 1L6 4.5L5 5L3.5 5.5L2 4L2.5 2.5Z" fill="#8a8a8a"/></svg></div><div class="b" style="left:366.5px;top:232px;width:1.3px;height:82.6px;background:#8a8a8a;border-radius:1px"></div><div class="b" style="left:372.7px;top:220px;width:0.8px;height:185.5px;background:#2c2c2c"></div><div class="t" style="left:265.4px;top:406.7px;font-size:7.6px;line-height:12px;color:#e0e0e0;font-weight:normal;">38 items</div><div class="b" style="left:297.6px;top:408px;width:0.8px;height:8px;background:#d0d0d0"></div><svg class="b" style="left:377.5px;top:227.3px;" width="7" height="5" viewBox="0 0 7 5"><path d="M0.5 0.6L3.5 3.6L6.5 0.6" fill="none" stroke="#c8c8c8" stroke-width="0.9"/></svg><div class="t" style="left:387.5px;top:222.8px;font-size:9.5px;line-height:14px;color:#f2f2f2;font-weight:normal;">Last month</div><svg class="b" style="left:396px;top:244.5px;" width="37.8" height="50" viewBox="0 0 37.8 50"><path d="M0 0H25.8L37.8 12V50H0Z" fill="#f7f7f7"/><path d="M25.8 0V12H37.8Z" fill="#dadada"/></svg><div class="t" style="left:314.3px;width:200px;text-align:center;top:299.0px;font-size:7.8px;line-height:12px;color:#f0f0f0;font-weight:normal;letter-spacing:0.18px">yoink.py</div><svg class="b" style="left:452px;top:246px;" width="58" height="50" viewBox="0 0 58 50"><defs><linearGradient id="mg" x1="0" y1="0" x2="1" y2="1"><stop offset="0" stop-color="#35cbe0"/><stop offset="1" stop-color="#1a72cc"/></linearGradient>
<radialGradient id="cd" cx="0.4" cy="0.35" r="0.7"><stop offset="0" stop-color="#f4f4f4"/><stop offset="0.6" stop-color="#d4d4d4"/><stop offset="1" stop-color="#b8b8b8"/></radialGradient></defs>
<rect x="4" y="1" width="50.6" height="36.3" rx="1" fill="url(#mg)" stroke="#8a9aa6" stroke-width="0.8"/>
<rect x="26" y="37" width="8" height="5" fill="#a9b3b9"/><rect x="24" y="41.5" width="18" height="2.6" rx="1" fill="#b9c3c9"/>
<circle cx="16.6" cy="32" r="15.3" fill="url(#cd)"/><path d="M16.6 32L3 25A15.3 15.3 0 0 1 9 18.8Z" fill="#f6f6f6" opacity="0.8"/><path d="M16.6 32L31.5 35.5A15.3 15.3 0 0 1 25 44.8Z" fill="#c4c4c4" opacity="0.7"/><path d="M16.6 32L10 45.8A15.3 15.3 0 0 1 3.5 40Z" fill="#e2e2e2" opacity="0.6"/><circle cx="16.6" cy="32" r="5.2" fill="#4a8ee0"/><circle cx="16.6" cy="32" r="2.6" fill="#6aaaf0"/><circle cx="16.6" cy="32" r="1.1" fill="#2a66c0"/></svg><div class="t" style="left:381.4px;width:200px;text-align:center;top:299.0px;font-size:7.8px;line-height:12px;color:#f0f0f0;font-weight:normal;letter-spacing:0.18px">mysql-installer-</div><div class="t" style="left:381.4px;width:200px;text-align:center;top:309.4px;font-size:7.8px;line-height:12px;color:#f0f0f0;font-weight:normal;letter-spacing:0.18px">community-8.0.</div><div class="t" style="left:381.4px;width:200px;text-align:center;top:319.8px;font-size:7.8px;line-height:12px;color:#f0f0f0;font-weight:normal;letter-spacing:0.18px">33.0</div><svg class="b" style="left:529px;top:244px;" width="38.2" height="50.5" viewBox="0 0 38.2 50.5"><path d="M0 0H26.200000000000003L38.2 12V50.5H0Z" fill="#f7f7f7"/><path d="M4 5.5H24.700000000000003" stroke="#e2e2e2" stroke-width="0.8"/><path d="M4 9.5H24.700000000000003" stroke="#e2e2e2" stroke-width="0.8"/><path d="M4 13.5H34.2" stroke="#e2e2e2" stroke-width="0.8"/><path d="M4 17.5H34.2" stroke="#e2e2e2" stroke-width="0.8"/><path d="M4 21.3H34.2" stroke="#e2e2e2" stroke-width="0.8"/><path d="M4 47H34.2" stroke="#e2e2e2" stroke-width="0.8"/><path d="M26.200000000000003 0V12H38.2Z" fill="#dadada"/></svg><svg class="b" style="left:527.7px;top:267px;" width="40.8" height="19" viewBox="0 0 40.8 19"><rect x="0" y="0" width="40.8" height="19" fill="#e3001b"/><text x="21" y="14.5" text-anchor="middle" font-family="Liberation Sans" font-size="14" letter-spacing="1.5" fill="#fff" stroke="#fff" stroke-width="0.2">PDF</text></svg><div class="t" style="left:448.1px;width:200px;text-align:center;top:298.6px;font-size:7.8px;line-height:12px;color:#f0f0f0;font-weight:normal;letter-spacing:0.18px">G12 Physics</div><div class="t" style="left:448.1px;width:200px;text-align:center;top:309.0px;font-size:7.8px;line-height:12px;color:#f0f0f0;font-weight:normal;letter-spacing:0.18px">Study material</div><svg class="b" style="left:595.8px;top:244px;" width="38.2" height="50.5" viewBox="0 0 38.2 50.5"><path d="M0 0H26.200000000000003L38.2 12V50.5H0Z" fill="#f7f7f7"/><path d="M4 5.5H24.700000000000003" stroke="#e2e2e2" stroke-width="0.8"/><path d="M4 9.5H24.700000000000003" stroke="#e2e2e2" stroke-width="0.8"/><path d="M4 13.5H34.2" stroke="#e2e2e2" stroke-width="0.8"/><path d="M4 17.5H34.2" stroke="#e2e2e2" stroke-width="0.8"/><path d="M4 21.3H34.2" stroke="#e2e2e2" stroke-width="0.8"/><path d="M4 47H34.2" stroke="#e2e2e2" stroke-width="0.8"/><path d="M26.200000000000003 0V12H38.2Z" fill="#dadada"/></svg><svg class="b" style="left:594.5px;top:267px;" width="40.8" height="19" viewBox="0 0 40.8 19"><rect x="0" y="0" width="40.8" height="19" fill="#e3001b"/><text x="21" y="14.5" text-anchor="middle" font-family="Liberation Sans" font-size="14" letter-spacing="1.5" fill="#fff" stroke="#fff" stroke-width="0.2">PDF</text></svg><div class="t" style="left:514.6px;width:200px;text-align:center;top:298.6px;font-size:7.8px;line-height:12px;color:#f0f0f0;font-weight:normal;letter-spacing:0.18px">Moving</div><div class="t" style="left:514.6px;width:200px;text-align:center;top:309.0px;font-size:7.8px;line-height:12px;color:#f0f0f0;font-weight:normal;letter-spacing:0.18px">Charges &amp;</div><div class="t" style="left:514.6px;width:200px;text-align:center;top:319.40000000000003px;font-size:7.8px;line-height:12px;color:#f0f0f0;font-weight:normal;letter-spacing:0.18px">Magnetism</div><svg class="b" style="left:662.6px;top:244px;" width="37.3" height="50" viewBox="0 0 37.3 50"><path d="M0 0H25.299999999999997L37.3 12V50H0Z" fill="#f7f7f7"/><path d="M25.299999999999997 0V12H37.3Z" fill="#dadada"/></svg><svg class="b" style="left:655.8px;top:256.6px;" width="42" height="25.5" viewBox="0 0 42 25.5"><rect x="0" y="0" width="25.4" height="25.3" rx="2" fill="#185abd"/><text x="12.7" y="19.5" text-anchor="middle" font-family="Liberation Sans" font-weight="bold" font-size="17" fill="#fff">W</text><path d="M27.5 7H40.5M27.5 10.5H40.5M27.5 14H40.5M27.5 17.5H40.5" stroke="#2b7cd3" stroke-width="1.3"/></svg><div class="t" style="left:581.9px;width:200px;text-align:center;top:298.8px;font-size:7.8px;line-height:12px;color:#f0f0f0;font-weight:normal;letter-spacing:-0.38px">IMPORTANT</div><div class="t" style="left:581.9px;width:200px;text-align:center;top:309.2px;font-size:7.8px;line-height:12px;color:#f0f0f0;font-weight:normal;letter-spacing:-0.38px">QUESTIONS</div><div class="t" style="left:581.9px;width:200px;text-align:center;top:319.6px;font-size:7.8px;line-height:12px;color:#f0f0f0;font-weight:normal;letter-spacing:-0.38px">FOR ALDEHYDR</div><div class="t" style="left:581.9px;width:200px;text-align:center;top:330.0px;font-size:7.8px;line-height:12px;color:#f0f0f0;font-weight:normal;letter-spacing:-0.38px">KETONE AND...</div><svg class="b" style="left:729px;top:244px;" width="38.2" height="50.5" viewBox="0 0 38.2 50.5"><path d="M0 0H26.200000000000003L38.2 12V50.5H0Z" fill="#f7f7f7"/><path d="M4 5.5H24.700000000000003" stroke="#e2e2e2" stroke-width="0.8"/><path d="M4 9.5H24.700000000000003" stroke="#e2e2e2" stroke-width="0.8"/><path d="M4 13.5H34.2" stroke="#e2e2e2" stroke-width="0.8"/><path d="M4 17.5H34.2" stroke="#e2e2e2" stroke-width="0.8"/><path d="M4 21.3H34.2" stroke="#e2e2e2" stroke-width="0.8"/><path d="M4 47H34.2" stroke="#e2e2e2" stroke-width="0.8"/><path d="M26.200000000000003 0V12H38.2Z" fill="#dadada"/></svg><svg class="b" style="left:727.7px;top:267px;" width="40.8" height="19" viewBox="0 0 40.8 19"><rect x="0" y="0" width="40.8" height="19" fill="#e3001b"/><text x="21" y="14.5" text-anchor="middle" font-family="Liberation Sans" font-size="14" letter-spacing="1.5" fill="#fff" stroke="#fff" stroke-width="0.2">PDF</text></svg><div class="t" style="left:648.7px;width:200px;text-align:center;top:298.8px;font-size:7.8px;line-height:12px;color:#f0f0f0;font-weight:normal;letter-spacing:0.18px">Chapter</div><div class="t" style="left:648.7px;width:200px;text-align:center;top:309.2px;font-size:7.8px;line-height:12px;color:#f0f0f0;font-weight:normal;letter-spacing:-0.38px">2-ELECTROSTAT</div><div class="t" style="left:648.7px;width:200px;text-align:center;top:319.6px;font-size:7.8px;line-height:12px;color:#f0f0f0;font-weight:normal;letter-spacing:-0.38px">IC POTENTIAL</div><div class="t" style="left:648.7px;width:200px;text-align:center;top:330.0px;font-size:7.8px;line-height:12px;color:#f0f0f0;font-weight:normal;letter-spacing:-0.38px">AND CAPACIT...</div><svg class="b" style="left:395.5px;top:347.2px;" width="38.2" height="50.5" viewBox="0 0 38.2 50.5"><path d="M0 0H26.200000000000003L38.2 12V50.5H0Z" fill="#f7f7f7"/><path d="M4 5.5H24.700000000000003" stroke="#e2e2e2" stroke-width="0.8"/><path d="M4 9.5H24.700000000000003" stroke="#e2e2e2" stroke-width="0.8"/><path d="M4 13.5H34.2" stroke="#e2e2e2" stroke-width="0.8"/><path d="M4 17.5H34.2" stroke="#e2e2e2" stroke-width="0.8"/><path d="M4 21.3H34.2" stroke="#e2e2e2" stroke-width="0.8"/><path d="M4 47H34.2" stroke="#e2e2e2" stroke-width="0.8"/><path d="M26.200000000000003 0V12H38.2Z" fill="#dadada"/></svg><svg class="b" style="left:394.2px;top:370.2px;" width="40.8" height="19" viewBox="0 0 40.8 19"><rect x="0" y="0" width="40.8" height="19" fill="#e3001b"/><text x="21" y="14.5" text-anchor="middle" font-family="Liberation Sans" font-size="14" letter-spacing="1.5" fill="#fff" stroke="#fff" stroke-width="0.2">PDF</text></svg><svg class="b" style="left:453.2px;top:344.4px;" width="55.3" height="52.6" viewBox="0 0 55.3 52.6"><defs><linearGradient id="ph" x1="0" y1="0" x2="0" y2="1"><stop offset="0" stop-color="#7a4a28"/><stop offset="0.1" stop-color="#a47040"/><stop offset="0.22" stop-color="#b8885a"/><stop offset="0.32" stop-color="#80603e"/><stop offset="0.45" stop-color="#4a3c36"/><stop offset="0.7" stop-color="#2e2628"/><stop offset="0.76" stop-color="#1a1418"/><stop offset="1" stop-color="#121012"/></linearGradient>
<filter id="bl" x="-0.1" y="-0.1" width="1.2" height="1.2"><feGaussianBlur stdDeviation="0.45"/></filter></defs>
<rect width="55.3" height="52.6" fill="url(#ph)"/>
<g filter="url(#bl)">
<path d="M0 6Q27 11 55.3 6" stroke="#e8c8a0" stroke-width="1.3" fill="none" opacity="0.6"/>
<path d="M0 12Q27 16 55.3 12" stroke="#e0c098" stroke-width="1.1" fill="none" opacity="0.55"/>
<rect x="1" y="15" width="7" height="14" fill="#c09050" opacity="0.55"/><rect x="47" y="15" width="7" height="12" fill="#b08850" opacity="0.5"/>
<rect x="16" y="17" width="24" height="9" fill="#7aa0c8"/>
<ellipse cx="18.2" cy="21.7" rx="2.1" ry="2.5" fill="#2a2224"/><ellipse cx="44.5" cy="20.7" rx="2.0" ry="2.4" fill="#2a2a40"/><ellipse cx="12.4" cy="20.5" rx="1.8" ry="2.1" fill="#4a3a34"/><ellipse cx="5.8" cy="26.6" rx="2.4" ry="2.8" fill="#2a2224"/><ellipse cx="51.2" cy="30.4" rx="2.0" ry="2.4" fill="#1a1618"/><ellipse cx="31.6" cy="26.1" rx="2.6" ry="3.1" fill="#1a1618"/><ellipse cx="30.5" cy="21.4" rx="1.8" ry="2.1" fill="#2a2a40"/><ellipse cx="7.2" cy="24.6" rx="2.3" ry="2.8" fill="#3a3030"/><ellipse cx="6.5" cy="29.3" rx="1.5" ry="1.8" fill="#2a2224"/><ellipse cx="30.0" cy="20.1" rx="1.3" ry="1.5" fill="#4a3a34"/><ellipse cx="27.3" cy="28.6" rx="2.3" ry="2.7" fill="#e0d8d0"/><ellipse cx="32.0" cy="27.2" rx="1.6" ry="1.9" fill="#3a3030"/><ellipse cx="38.0" cy="23.4" rx="2.0" ry="2.4" fill="#2a2a40"/><ellipse cx="27.2" cy="25.2" rx="1.8" ry="2.2" fill="#503830"/><ellipse cx="52.9" cy="21.1" rx="1.8" ry="2.1" fill="#8a7868"/><ellipse cx="9.1" cy="27.8" rx="1.3" ry="1.5" fill="#2a2224"/><ellipse cx="41.5" cy="29.3" rx="2.4" ry="2.9" fill="#8a7868"/><ellipse cx="19.0" cy="25.3" rx="1.9" ry="2.3" fill="#e0d8d0"/><ellipse cx="4.6" cy="20.7" rx="1.6" ry="1.9" fill="#2a2224"/><ellipse cx="4.2" cy="31.6" rx="2.1" ry="2.5" fill="#e0d8d0"/><ellipse cx="16.1" cy="25.9" rx="2.1" ry="2.6" fill="#1a1618"/><ellipse cx="50.9" cy="25.4" rx="2.1" ry="2.5" fill="#e0d8d0"/><ellipse cx="4.1" cy="32.8" rx="1.4" ry="1.7" fill="#4a3a34"/><ellipse cx="22.1" cy="35.5" rx="1.9" ry="2.3" fill="#3a3030"/><ellipse cx="24.8" cy="28.9" rx="2.4" ry="2.9" fill="#c8b8a8"/><ellipse cx="46.8" cy="24.0" rx="1.8" ry="2.1" fill="#8a7868"/><ellipse cx="37.2" cy="25.8" rx="1.5" ry="1.8" fill="#2a2224"/><ellipse cx="10.3" cy="23.2" rx="1.5" ry="1.8" fill="#e0d8d0"/><ellipse cx="45.0" cy="22.3" rx="1.6" ry="1.9" fill="#3a3030"/><ellipse cx="23.2" cy="25.6" rx="2.0" ry="2.4" fill="#3a3030"/><ellipse cx="37.6" cy="28.3" rx="2.1" ry="2.5" fill="#1a1618"/><ellipse cx="25.2" cy="34.7" rx="2.5" ry="3.0" fill="#2a2a40"/><ellipse cx="21.8" cy="26.2" rx="1.3" ry="1.6" fill="#c8b8a8"/><ellipse cx="4.3" cy="20.2" rx="1.5" ry="1.8" fill="#3a3030"/><ellipse cx="6.8" cy="29.8" rx="1.3" ry="1.6" fill="#503830"/><ellipse cx="9.0" cy="20.8" rx="1.7" ry="2.1" fill="#1a1618"/><ellipse cx="4.7" cy="22.7" rx="1.7" ry="2.1" fill="#6a5a50"/><ellipse cx="51.6" cy="29.8" rx="1.9" ry="2.2" fill="#2a2224"/><ellipse cx="46.0" cy="36.9" rx="1.9" ry="2.2" fill="#e0d8d0"/><ellipse cx="17.5" cy="21.6" rx="2.2" ry="2.7" fill="#6a5a50"/><ellipse cx="26.4" cy="31.5" rx="1.9" ry="2.3" fill="#4a3a34"/><ellipse cx="51.4" cy="28.5" rx="1.4" ry="1.7" fill="#2a2a40"/><ellipse cx="49.4" cy="32.6" rx="1.6" ry="1.9" fill="#2a2224"/><ellipse cx="37.9" cy="23.7" rx="1.7" ry="2.1" fill="#3a3030"/><ellipse cx="19.9" cy="23.0" rx="2.0" ry="2.3" fill="#2a2a40"/><ellipse cx="18.5" cy="23.0" rx="2.3" ry="2.8" fill="#4a3a34"/><ellipse cx="43.7" cy="33.7" rx="2.2" ry="2.7" fill="#4a3a34"/><ellipse cx="11.6" cy="27.9" rx="2.2" ry="2.7" fill="#1a1618"/><ellipse cx="42.9" cy="27.5" rx="1.5" ry="1.8" fill="#503830"/><ellipse cx="51.7" cy="27.1" rx="2.5" ry="3.0" fill="#8a7868"/><ellipse cx="51.6" cy="25.6" rx="1.5" ry="1.8" fill="#4a3a34"/><ellipse cx="25.9" cy="25.1" rx="1.9" ry="2.3" fill="#503830"/><ellipse cx="45.5" cy="27.6" rx="2.1" ry="2.5" fill="#2a2224"/><ellipse cx="45.2" cy="21.2" rx="1.7" ry="2.1" fill="#4a3a34"/><ellipse cx="26.3" cy="22.2" rx="2.3" ry="2.8" fill="#8a7868"/><ellipse cx="5.6" cy="36.0" rx="2.2" ry="2.7" fill="#e0d8d0"/><ellipse cx="22.3" cy="36.0" rx="2.2" ry="2.7" fill="#3a3030"/><ellipse cx="53.6" cy="19.5" rx="2.0" ry="2.4" fill="#e0d8d0"/><ellipse cx="43.7" cy="21.6" rx="2.4" ry="2.8" fill="#e0d8d0"/><ellipse cx="35.8" cy="25.3" rx="2.0" ry="2.4" fill="#3a3030"/><ellipse cx="2.1" cy="33.4" rx="2.2" ry="2.7" fill="#2a2224"/><ellipse cx="28.9" cy="35.8" rx="1.8" ry="2.2" fill="#4a3a34"/><ellipse cx="44.8" cy="22.8" rx="1.6" ry="1.9" fill="#6a5a50"/><ellipse cx="27.6" cy="32.7" rx="1.7" ry="2.0" fill="#2a2a40"/><ellipse cx="23.2" cy="21.4" rx="2.5" ry="3.0" fill="#8a7868"/><ellipse cx="48.6" cy="30.9" rx="2.3" ry="2.8" fill="#2a2a40"/><ellipse cx="23.3" cy="35.5" rx="1.9" ry="2.3" fill="#2a2a40"/><ellipse cx="9.0" cy="28.2" rx="2.4" ry="2.9" fill="#3a3030"/><ellipse cx="33.3" cy="33.0" rx="1.4" ry="1.7" fill="#3a3030"/><ellipse cx="26.1" cy="32.1" rx="2.0" ry="2.4" fill="#8a7868"/>
<rect x="20" y="33" width="18" height="5" fill="#3a58a8"/>
</g>
<rect x="6" y="39.6" width="43.5" height="2.2" fill="#26c24c"/><rect x="6" y="42.6" width="43.5" height="2.2" fill="#e0283a"/>
<rect x="24.5" y="46" width="7" height="1.2" fill="#d8d8d8"/>
<rect x="4" y="49.5" width="8" height="0.8" fill="#888"/><rect x="20" y="49.5" width="14" height="0.8" fill="#777"/><rect x="45" y="49.5" width="6" height="0.8" fill="#888"/>
<rect x="40" y="3.5" width="5" height="4" fill="#e8e8e8" opacity="0.8"/><circle cx="48" cy="4.8" r="1.6" fill="#e8e8e8" opacity="0.8"/></svg><svg class="b" style="left:528.6px;top:347px;" width="38.5" height="50.8" viewBox="0 0 38.5 50.8"><path d="M0 0H26.5L38.5 12V50.8H0Z" fill="#f7f7f7"/><path d="M26.5 0V12H38.5Z" fill="#dadada"/><defs><linearGradient id="ring" x1="0" y1="0" x2="0" y2="1"><stop offset="0" stop-color="#f08a4a"/><stop offset="1" stop-color="#9a4ad8"/></linearGradient></defs><circle cx="19.4" cy="26" r="13.3" fill="url(#ring)"/><circle cx="19.4" cy="26" r="11.3" fill="#333"/><path d="M15.8 19.8L25.3 26L15.8 32.2Z" fill="#f0f0f0"/></svg><svg class="b" style="left:589px;top:350.7px;" width="52" height="40.5" viewBox="0 0 52 40.5"><defs><linearGradient id="ff" x1="0" y1="0" x2="0" y2="1"><stop offset="0" stop-color="#fde07a"/><stop offset="1" stop-color="#f8c840"/></linearGradient></defs>
<path d="M0 2Q0 0 2 0H19L22.5 3.5H50Q51.6 3.5 51.6 5.2V38Q51.6 40.3 49.5 40.3H2Q0 40.3 0 38Z" fill="#f2b52a"/>
<rect x="1.5" y="7" width="48.6" height="31" rx="1" fill="#f0d488"/>
<path d="M16 10H29L33.5 14.5V28H16Z" fill="#f6f6f6"/><path d="M29 10V14.5H33.5Z" fill="#d8d8d8"/>
<path d="M0 23Q0 21.5 1.5 21.5H50Q51.6 21.5 51.6 23V38Q51.6 40.3 49.5 40.3H2Q0 40.3 0 38Z" fill="url(#ff)"/></svg><div class="b" style="left:374px;top:402.2px;width:419px;height:3.3px;overflow:hidden"><div class="t" style="left:-59.39999999999998px;width:200px;text-align:center;top:-1.2px;font-size:7.8px;line-height:12px;color:#f0f0f0">Chapter 3 Current</div><div class="t" style="left:6.800000000000011px;width:200px;text-align:center;top:-1.2px;font-size:7.8px;line-height:12px;color:#f0f0f0">Orientation</div><div class="t" style="left:73.5px;width:200px;text-align:center;top:-1.2px;font-size:7.8px;line-height:12px;color:#f0f0f0">recording</div><div class="t" style="left:140.60000000000002px;width:200px;text-align:center;top:-1.2px;font-size:7.8px;line-height:12px;color:#f0f0f0">2023 downloads</div></div><div class="b" style="left:788.3px;top:318px;width:1.3px;height:34px;background:#8a8a8a;border-radius:1px"></div><svg class="b" style="left:766.2px;top:406.8px;" width="10" height="10" viewBox="0 0 10 10"><rect x="0.5" y="0.5" width="9" height="9" rx="1.5" fill="#2a2a2a" stroke="#a8a8a8" stroke-width="0.9"/><path d="M2 2.5H8M2 3.7H8M2 4.9H8" stroke="#7a7a7a" stroke-width="0.6"/><path d="M2 7H8" stroke="#bbb" stroke-width="0.8"/></svg><div class="b" style="left:777.6px;top:405px;width:13.3px;height:13.6px;background:#4e4e4e;border-radius:1px"></div><svg class="b" style="left:779.5px;top:407.3px;" width="10" height="9.5" viewBox="0 0 10 9.5"><rect x="0.6" y="0.6" width="8.8" height="8.3" rx="1.5" fill="#333" stroke="#d8d8d8" stroke-width="1"/><rect x="2.2" y="2.4" width="5.6" height="3.6" fill="#fafafa"/><path d="M2.5 7.3H7.5" stroke="#888" stroke-width="0.7"/></svg><div class="b" style="left:0px;top:437px;width:828px;height:29px;background:linear-gradient(90deg,#262626 0%,#272625 9.7%,#2c2419 15.7%,#33231a 24%,#3a2218 29%,#30231a 36%,#2e2119 48%,#3a1c19 58%,#3c1a18 65%,#2e201d 72%,#272321 82%,#262322 100%)"></div><div class="b" style="left:0px;top:437px;width:828px;height:0.6px;background:#4a4442"></div><div class="b" style="left:389.1px;top:439.4px;width:24.2px;height:24.2px;background:rgba(255,255,255,0.05);border-radius:3px"></div><div class="b" style="left:396px;top:461px;width:9.5px;height:1.6px;background:#d090e8;border-radius:1px"></div><svg class="b" style="left:340.5px;top:444.4px;" width="14.6" height="14.6" viewBox="0 0 14.6 14.6"><rect x="0" y="0" width="6.8" height="6.8" fill="#5ad0f6"/><rect x="7.8" y="0" width="6.8" height="6.8" fill="#48c4f4"/><rect x="0" y="7.8" width="6.8" height="6.8" fill="#36b4f0"/><rect x="7.8" y="7.8" width="6.8" height="6.8" fill="#2aa6ea"/></svg><svg class="b" style="left:367px;top:444.5px;" width="14" height="14" viewBox="0 0 14 14"><g transform="translate(7 7)"><circle r="5.6" fill="#8a9aa8"/><rect x="-1.4" y="-7" width="2.8" height="3" fill="#8a9aa8" transform="rotate(0)"/><rect x="-1.4" y="-7" width="2.8" height="3" fill="#8a9aa8" transform="rotate(45)"/><rect x="-1.4" y="-7" width="2.8" height="3" fill="#8a9aa8" transform="rotate(90)"/><rect x="-1.4" y="-7" width="2.8" height="3" fill="#8a9aa8" transform="rotate(135)"/><rect x="-1.4" y="-7" width="2.8" height="3" fill="#8a9aa8" transform="rotate(180)"/><rect x="-1.4" y="-7" width="2.8" height="3" fill="#8a9aa8" transform="rotate(225)"/><rect x="-1.4" y="-7" width="2.8" height="3" fill="#8a9aa8" transform="rotate(270)"/><rect x="-1.4" y="-7" width="2.8" height="3" fill="#8a9aa8" transform="rotate(315)"/><circle r="3" fill="#2a62c8"/><circle r="1.6" fill="#3a3a4a"/></g></svg><svg class="b" style="left:393.8px;top:444px;" width="14" height="14" viewBox="0 0 14 14"><path d="M0 1Q0 0 1 0H5L6.5 1.5H13Q14 1.5 14 2.5V13H0Z" fill="#f5c23a"/><rect x="0" y="3.5" width="14" height="9.5" rx="0.6" fill="#fcd65a"/><rect x="3.5" y="8" width="9" height="5" rx="0.8" fill="#2b7cd3"/></svg><svg class="b" style="left:420.3px;top:443.7px;" width="14.6" height="14.6" viewBox="0 0 14.6 14.6"><defs><linearGradient id="eg" x1="0" y1="0" x2="0.3" y2="1"><stop offset="0" stop-color="#36b2ec"/><stop offset="1" stop-color="#0d5cb8"/></linearGradient><linearGradient id="eg2" x1="0" y1="0" x2="0" y2="1"><stop offset="0" stop-color="#58d27a"/><stop offset="1" stop-color="#2fae5a"/></linearGradient></defs><circle cx="7.3" cy="7.3" r="7.1" fill="url(#eg)"/><path d="M8.2 1Q13.8 2 14.2 7.8Q14 10.2 12.6 11Q13 8 10.5 6.5Q8.5 5.6 7 6.8Z" fill="url(#eg2)"/><circle cx="9.6" cy="9.4" r="3" fill="#1552a8"/><path d="M5.2 9.6Q5.2 13.2 9.5 13.6Q11.8 13.6 13.2 12" fill="none" stroke="#2a8ae0" stroke-width="1.2"/></svg><svg class="b" style="left:447.2px;top:444.5px;" width="14" height="14" viewBox="0 0 14 14"><circle cx="7" cy="7" r="6.8" fill="#f4f4f4"/><rect x="3" y="5.2" width="3.2" height="1.3" fill="#36c5f0"/><rect x="5.2" y="3" width="1.3" height="3.2" fill="#36c5f0"/><rect x="7.8" y="3" width="1.3" height="3.2" fill="#2eb67d"/><rect x="7.8" y="5.2" width="3.2" height="1.3" fill="#2eb67d"/><rect x="7.8" y="7.6" width="3.2" height="1.3" fill="#ecb22e"/><rect x="7.8" y="7.8" width="1.3" height="3.2" fill="#ecb22e"/><rect x="3" y="7.6" width="3.2" height="1.3" fill="#e01e5a"/><rect x="5.2" y="7.8" width="1.3" height="3.2" fill="#e01e5a"/></svg><div class="b" style="left:453.1px;top:461.2px;width:2.6px;height:1px;background:#a8a8a8"></div><svg class="b" style="left:473.8px;top:443.6px;" width="14.5" height="15.5" viewBox="0 0 14.5 15.5"><path d="M1.5 3.5Q2 1 4.5 1.2Q6.5 -0.2 9 0.8Q12 0.5 12.5 3Q14.3 5 13.2 7.5Q13.5 10.5 10.5 10.5Q8 11.5 6 10.8Q2.5 11.2 1.5 8.8Q0 6.5 1.5 3.5Z" fill="#5a6e22"/><circle cx="4" cy="4" r="0.8" fill="#a07050" opacity="0.8"/><circle cx="9.5" cy="3" r="0.7" fill="#a07050" opacity="0.8"/><circle cx="11.5" cy="7" r="0.8" fill="#a07050" opacity="0.8"/><circle cx="3" cy="8" r="0.7" fill="#b08060" opacity="0.8"/><circle cx="7" cy="6" r="0.6" fill="#8a6a40" opacity="0.8"/><path d="M7 10V13.5M7 11.5L4.5 9.5M7 11L9.5 9" stroke="#d8d0c0" stroke-width="0.9"/><rect x="3.5" y="13.3" width="7" height="1.4" rx="0.6" fill="#c8c8d0"/></svg><div class="b" style="left:479.7px;top:461.2px;width:2.6px;height:1px;background:#a8a8a8"></div><svg class="b" style="left:682px;top:448.5px;" width="8" height="5" viewBox="0 0 8 5"><path d="M0.6 4.2L4 0.8L7.4 4.2" fill="none" stroke="#e8e8e8" stroke-width="1"/></svg><svg class="b" style="left:700px;top:446.5px;" width="11" height="10" viewBox="0 0 11 10"><path d="M1.2 2.8L2.8 3.8M3.5 0.8L4.2 2.6M6.2 0.6L5.8 2.5M0.6 5.4H2.6M1.2 8.2L2.8 7" stroke="#f0f0f0" stroke-width="0.9"/><circle cx="5.7" cy="6" r="2.7" fill="#2aa8f8"/></svg><svg class="b" style="left:719.5px;top:447px;" width="10" height="8" viewBox="0 0 10 8"><path d="M0.8 3Q5 -0.5 9.2 3M2.3 4.6Q5 2.3 7.7 4.6M3.8 6.2Q5 5.2 6.2 6.2" fill="none" stroke="#e8e8e8" stroke-width="0.9"/><circle cx="5" cy="7.4" r="0.6" fill="#e8e8e8"/></svg><svg class="b" style="left:733.5px;top:446px;" width="11" height="10" viewBox="0 0 11 10"><path d="M0.5 3.5H2.5L5 1V9L2.5 6.5H0.5Z" fill="none" stroke="#e8e8e8" stroke-width="0.9"/><path d="M6.5 3.5Q7.5 5 6.5 6.5M8 2Q10 5 8 8M9.5 1Q11.8 5 9.5 9" fill="none" stroke="#e8e8e8" stroke-width="0.8"/></svg><svg class="b" style="left:748.2px;top:446.3px;" width="11" height="9.5" viewBox="0 0 11 9.5"><path d="M1.8 3.2V1.2" stroke="#e8e8e8" stroke-width="0.9"/><rect x="0.6" y="3.3" width="9" height="5.6" rx="1.2" fill="#e8e8e8"/><rect x="9.6" y="5" width="1.2" height="2.2" rx="0.4" fill="#e8e8e8"/><path d="M2 8L6 4.5" stroke="#8a8a8a" stroke-width="0.5"/></svg><div class="t" style="right:26.299999999999955px;top:441.5px;font-size:7.5px;line-height:10px;color:#f0f0f0;font-weight:normal;">10:59 PM</div><div class="t" style="right:26.299999999999955px;top:450.7px;font-size:7.5px;line-height:10px;color:#f0f0f0;font-weight:normal;">6/15/2023</div><svg class="b" style="left:805.5px;top:445.7px;" width="10.5" height="10.5" viewBox="0 0 10.5 10.5"><circle cx="5.25" cy="5.25" r="5.2" fill="#d4a2e4"/><text x="5.25" y="7.7" text-anchor="middle" font-family="Liberation Sans" font-size="6.5" fill="#3a2a3e">18</text></svg><div class="b" style="left:824.2px;top:446px;width:0.8px;height:10px;background:#8a8a8a"></div>
</body></html>
